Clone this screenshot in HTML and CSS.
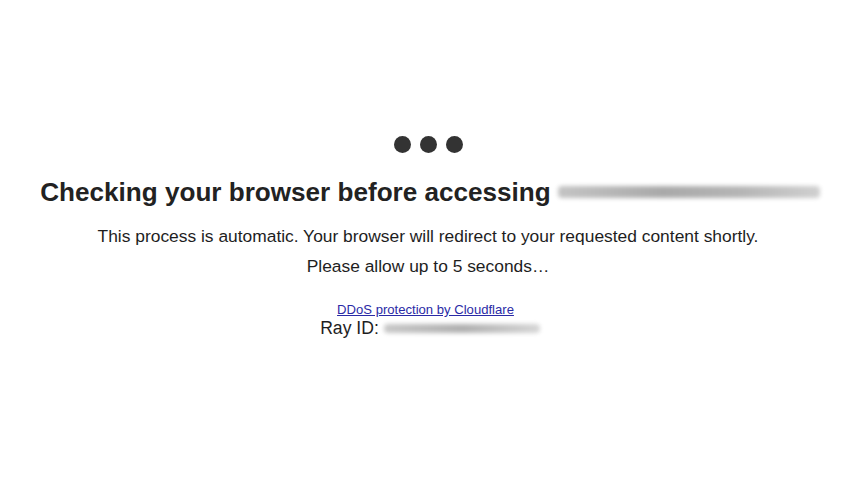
FILE: index.html
```html
<!DOCTYPE html>
<html>
<head>
<meta charset="utf-8">
<link rel="stylesheet" href="styles.css">
</head>
<body>
<div class="page">
  <div class="dots"><span class="dot"></span><span class="dot"></span><span class="dot"></span></div>
  <h1 class="title">Checking your browser before accessing <span class="blur blur-host"></span></h1>
  <p class="msg">This process is automatic. Your browser will redirect to your requested content shortly.</p>
  <p class="msg msg2">Please allow up to 5 seconds…</p>
  <div class="footer">
    <a class="link" href="#">DDoS protection by Cloudflare</a>
    <div class="ray">Ray ID: <span class="blur blur-ray"></span></div>
  </div>
</div>
</body>
</html>
```
FILE: styles.css
```css
html, body { margin: 0; padding: 0; background: #fff; }
body { font-family: "Liberation Sans", Arial, sans-serif; color: #1e1e1e; }
.page { display: flex; flex-direction: column; align-items: center; padding-top: 136px; padding-left: 4px; }
.dots { display: flex; gap: 9px; margin-left: -4px; }
.dot { width: 17px; height: 17px; border-radius: 50%; background: #333; display: block; }
.title { font-size: 26.1px; font-weight: bold; margin: 24px 0 0 0; line-height: 30px; white-space: nowrap; display: flex; align-items: center; gap: 7px; color: #222; }
.blur { display: inline-block; background: #b8b8b8; filter: blur(2px); border-radius: 4px; }
.blur-host { width: 262px; height: 12px; background: linear-gradient(90deg, #c4c4c4, #a9a9a9 40%, #b5b5b5 70%, #d0d0d0); }
.msg { font-size: 17.4px; margin: 19px 0 0 0; line-height: 20px; margin-left: -4px; }
.msg2 { margin-top: 10px; }
.footer { display: flex; flex-direction: column; align-items: center; margin-top: 26px; margin-left: -4px; }
.link { font-size: 13.1px; color: #2a2aa6; line-height: 16px; margin-right: 5px; }
.ray { font-size: 17.6px; line-height: 21px; display: flex; align-items: center; gap: 5px; margin-left: 4px; }
.blur-ray { width: 156px; height: 9px; background: linear-gradient(90deg, #c8c8c8, #b0b0b0 50%, #d6d6d6); }
```
